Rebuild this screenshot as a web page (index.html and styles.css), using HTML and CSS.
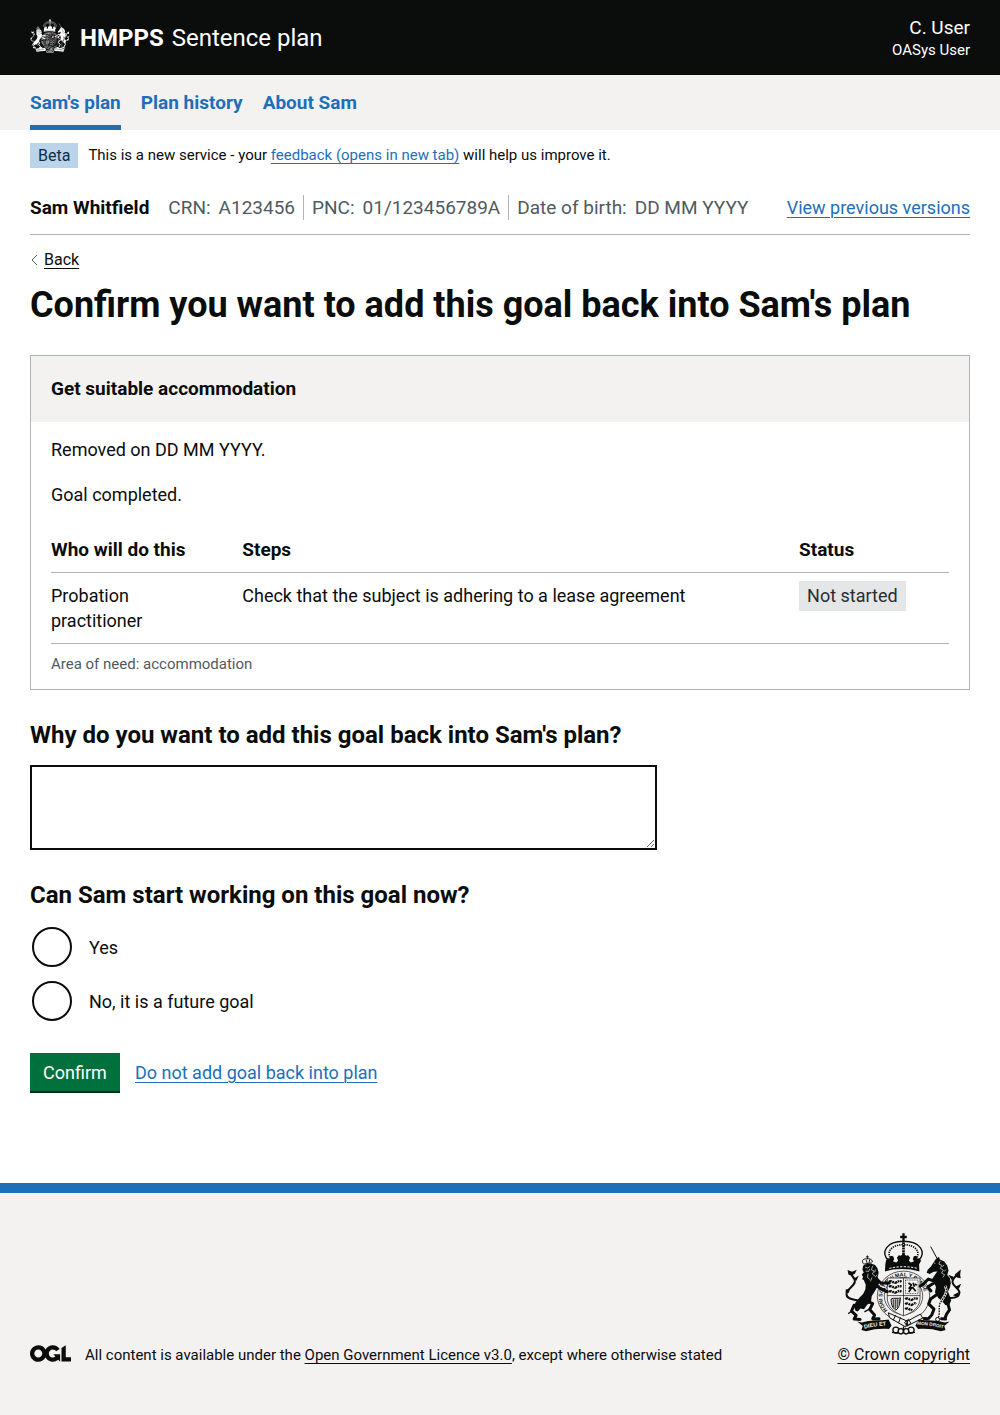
FILE: index.html
```html
<!DOCTYPE html>
<html lang="en">
<head>
  <meta charset="utf-8">
  <meta name="viewport" content="width=device-width, initial-scale=1">
  <title>Confirm you want to add this goal back into Sam's plan - Sentence plan</title>
  <link rel="stylesheet" href="styles.css">
</head>
<body>
  <header class="header">
    <div class="container header-inner">
      <div class="brand">
        <svg class="brand-crest" viewBox="36 22 350 308" aria-hidden="true"><use href="#crest"/></svg>
        <a class="brand-org" href="#">HMPPS</a>
        <a class="brand-service" href="#">Sentence plan</a>
      </div>
      <div class="user">
        <span class="user-name">C. User</span>
        <span class="user-role">OASys User</span>
      </div>
    </div>
  </header>

  <nav class="primary-nav" aria-label="Primary navigation">
    <div class="container nav-list">
      <a class="nav-link nav-link-current" href="#" aria-current="page">Sam's plan</a>
      <a class="nav-link" href="#">Plan history</a>
      <a class="nav-link" href="#">About Sam</a>
    </div>
  </nav>

  <div class="container">
    <div class="phase">
      <strong class="tag tag-beta">Beta</strong>
      <span>This is a new service - your <a class="link" href="#">feedback (opens in new tab)</a> will help us improve it.</span>
    </div>

    <div class="identity">
      <strong class="identity-name">Sam Whitfield</strong>
      <dl class="identity-list">
        <div class="identity-item"><dt>CRN:</dt><dd>A123456</dd></div>
        <div class="identity-item"><dt>PNC:</dt><dd>01/123456789A</dd></div>
        <div class="identity-item"><dt>Date of birth:</dt><dd>DD MM YYYY</dd></div>
      </dl>
      <a class="link identity-versions" href="#">View previous versions</a>
    </div>

    <div class="back">
      <svg class="back-arrow" viewBox="0 0 8 12" aria-hidden="true"><path d="M7 1L2 6l5 5"/></svg>
      <a class="link link-dark" href="#">Back</a>
    </div>

    <main>
      <h1 class="title">Confirm you want to add this goal back into Sam's plan</h1>

      <section class="card">
        <h2 class="card-title">Get suitable accommodation</h2>
        <div class="card-body">
          <p>Removed on DD MM YYYY.</p>
          <p>Goal completed.</p>
          <table class="steps">
            <thead>
              <tr><th class="col-who" scope="col">Who will do this</th><th scope="col">Steps</th><th class="col-status" scope="col">Status</th></tr>
            </thead>
            <tbody>
              <tr><td>Probation practitioner</td><td>Check that the subject is adhering to a lease agreement</td><td><strong class="tag tag-status">Not started</strong></td></tr>
            </tbody>
          </table>
          <p class="card-note">Area of need: accommodation</p>
        </div>
      </section>

      <form class="form">
        <div class="field">
          <label class="question" for="reason">Why do you want to add this goal back into Sam's plan?</label>
          <textarea class="textarea" id="reason" name="reason"></textarea>
        </div>
        <fieldset class="choices">
          <legend class="question">Can Sam start working on this goal now?</legend>
          <div class="choice">
            <input class="radio" type="radio" id="start-yes" name="start" value="yes">
            <label for="start-yes">Yes</label>
          </div>
          <div class="choice">
            <input class="radio" type="radio" id="start-no" name="start" value="no">
            <label for="start-no">No, it is a future goal</label>
          </div>
        </fieldset>
        <div class="actions">
          <button class="button" type="submit">Confirm</button>
          <a class="link" href="#">Do not add goal back into plan</a>
        </div>
      </form>
    </main>
  </div>

  <footer class="footer">
    <div class="container footer-inner">
      <div class="licence">
        <svg class="ogl" viewBox="0 0 483 196" aria-hidden="true"><path d="M421.5 142.8V.1l-50.7 32.3v161.1h112.4v-50.7zm-122.3-9.6A47.12 47.12 0 0 1 221 97.8c0-26 21.1-47.1 47.1-47.1 16.7 0 31.4 8.7 39.7 21.8l42.7-27.2A97.63 97.63 0 0 0 268.1 0c-36.5 0-68.3 20.1-85.1 49.7A98 98 0 0 0 97.8 0C43.9 0 0 43.9 0 97.8s43.9 97.8 97.8 97.8c36.5 0 68.3-20.1 85.1-49.7a97.76 97.76 0 0 0 149.6 25.4l19.4 22.2h3v-87.8h-80l24.3 27.5zM97.8 145c-26 0-47.1-21.1-47.1-47.1s21.1-47.1 47.1-47.1 47.1 21.1 47.1 47.1S123.8 145 97.8 145"/></svg>
        <span>All content is available under the <a class="link link-dark" href="#">Open Government Licence v3.0</a>, except where otherwise stated</span>
      </div>
      <div class="copyright">
        <svg class="footer-crest" viewBox="36 22 350 308" aria-hidden="true">
          <g id="crest" stroke-linejoin="round">
            <!-- crown -->
            <g fill="none" stroke="currentColor">
              <path stroke-width="7" d="M211 23v26M201 34h20"/>
              <path stroke-width="4" d="M166 106C140 80 160 47 211 47s71 33 45 59"/>
              <path stroke-width="5" stroke-dasharray="4 3" d="M174 102c-17-24 1-44 37-45 36 1 54 21 37 45"/>
              <path stroke-width="8" stroke-dasharray="6 2" d="M211 50v46"/>
            </g>
            <path fill="currentColor" d="M158 106l5-8 6 1 3-8 8 1 3 9-4 6 10 4 6-6-4-8 6-8 6 2 8-7 8 7 6-2 6 8-4 8 6 6 10-4-4-6 3-9 8-1 3 8 6-1 5 8-6 11 1 21c-32-10-76-10-104 0l1-21z"/>
            <path fill="none" stroke="var(--paper)" stroke-width="3" stroke-dasharray="7 4" d="M168 129c28-7 58-7 86 0"/>
            <!-- garter and shield -->
            <ellipse cx="211" cy="212" rx="79" ry="75" fill="var(--paper)" stroke="currentColor" stroke-width="2"/>
            <ellipse cx="211" cy="212" rx="58" ry="56" fill="none" stroke="currentColor" stroke-width="2"/>
            <path id="garter" fill="none" d="M164 257a64 62 0 1 1 94 0"/>
            <text class="crest-garter"><textPath href="#garter" startOffset="2">HONI SOIT QUI MAL Y PENSE</textPath></text>
            <path fill="var(--paper)" stroke="currentColor" stroke-width="2" d="M162 158h99v60c0 27-21 44-50 54-29-10-49-27-49-54z"/>
            <path fill="none" stroke="currentColor" stroke-width="2" d="M211 158v114M162 211h99"/>
            <path fill="none" stroke="currentColor" stroke-width="7" stroke-dasharray="9 2 5 2" d="M167 170q6-5 12 0t12 0 14-1M167 185q6-5 12 0t12 0 14-1M167 200q6-5 12 0t12 0 14-1M216 222q6-5 12 0t12 0 14-1M216 237q6-5 12 0t12 0 10-1M216 252q6-5 12 0t8-1"/>
            <path fill="none" stroke="currentColor" stroke-width="2" stroke-dasharray="3 2" d="M217 164h38v41h-38z"/>
            <path fill="none" stroke="currentColor" stroke-width="5" d="M226 173l9 6-7 10 11-2 9 11M240 172l4 12M235 188l-8 12M246 176l5 4"/>
            <path fill="none" stroke="currentColor" stroke-width="3" d="M174 221c10-5 19 1 28-3-2 15-3 29-14 37-11-7-15-18-14-34zM180 222v24M186 222v29M192 222v26M198 222v16"/>
            <!-- lion -->
            <path fill="none" stroke="currentColor" stroke-width="3" d="M90 115c-7-9-1-15 7-15s19-2 20 10M102 100v-10M98 94h8M91 116l24-4M98 103l3 9M109 102l-2 10"/>
            <path fill="currentColor" d="M89 121l8-5 16-2 12 5 7 9 4 13-3 14 6 14-4 10-8 14-12 20-2 16-13 11-8 12-11-2-8 9-7-2-4-12 4-13 11-14 12-12 7-14 1-14-6-14-5-2 3-7-4-8 6-6-4-8z"/>
            <path fill="none" stroke="currentColor" stroke-width="9" stroke-linecap="round" d="M128 160l16 14 24-1M124 176l18 15 20 8M62 240l-8 18 14 13-6 10M62 282l18 1M98 226l20 9-9 18 15 17-6 11M119 282l18-1"/>
            <path fill="none" stroke="currentColor" stroke-width="4" d="M156 166l8 14M152 188l6 15M108 252l-15 8M54 258l-10 8"/>
            <path fill="none" stroke="var(--paper)" stroke-width="2" d="M95 125l8 3 6-5M97 137l9 1 3-7M118 121l-4 12 8 4-5 9 8 6M104 145l-2 11 7 6M116 156l-5 12M126 132l-2 9M131 148l-5 7"/>
            <path fill="none" stroke="currentColor" stroke-width="6" d="M74 226c-19-3-35-6-35-18-1-16 22-24 25-38 2-12-9-17-13-26M39 206l1-14"/>
            <path fill="currentColor" d="M42 134l14 5 14-6-6 12-10 5-9-2zM61 160l15-10-7 16zM37 197l12-8-3 14z"/>
            <!-- unicorn -->
            <path fill="none" stroke="currentColor" stroke-width="3" d="M293 63l20 37"/>
            <path fill="currentColor" d="M308 101l10-7 3 8 13 6 9 12 4 15-4 14 8 9 3 16-3 13-6 12 6 14 4 13-6 13-11 1-11-13-11-9-10-17 3-16-5-12-9-8 9-14 9-13-11 1-12 7-9-4 3-9 10-10z"/>
            <path fill="none" stroke="currentColor" stroke-width="9" stroke-linecap="round" d="M306 168l-20-7-17 17-8 4M304 172l-20 13 10 12M312 208l-19 13-6 15 16 16-7 18-8 9M283 281l-10-1M344 232l6 22-9 13-5 13M326 281l12 1"/>
            <path fill="none" stroke="var(--paper)" stroke-width="2" d="M322 106l-4 10 9 4-5 9 9 5-5 9 9 5-5 8M303 112l4 2M333 118l-4 6M339 132l-5 6"/>
            <path fill="none" stroke="currentColor" stroke-width="6" d="M348 218c14 1 30-2 32-15 1-14-19-18-21-32-1-10 8-17 14-23"/>
            <path fill="currentColor" d="M384 132l-2 17 2 10-12-3-6-9zM346 148l16 6-4 12zM368 184l17-9-7 16zM360 210l18-10-2 16z"/>
            <path fill="none" stroke="var(--paper)" stroke-width="8" d="M337 182c11 21-8 37-16 53-5 12 1 27-5 44"/>
            <path fill="none" stroke="currentColor" stroke-width="4" stroke-dasharray="5 3" d="M337 182c11 21-8 37-16 53-5 12 1 27-5 44"/>
            <circle cx="314" cy="283" r="6" fill="none" stroke="currentColor" stroke-width="3"/>
            <!-- buckle, motto scroll and roses -->
            <path fill="var(--paper)" stroke="currentColor" stroke-width="3" d="M165 263l57 25-4 18-49-28zM223 288l39-21 7 12-46 23z"/>
            <path fill="none" stroke="currentColor" stroke-width="3" d="M187 270l-7 16M202 277l-6 17M214 292l12-9 7 11-11 9z"/>
            <path fill="currentColor" d="M71 289l14 3c27-8 51-5 81-9l9 19-8 10c-25-2-45 0-69 7l-14-4 4-12zM350 289l-14 3c-27-8-50-5-80-9l-9 19 8 10c25-2 45 0 69 7l14-4-4-12z"/>
            <path id="motto-left" fill="none" d="M93 311c26-8 49-8 76-11"/>
            <path id="motto-right" fill="none" d="M252 299c26 1 50 3 82 12"/>
            <text class="crest-motto"><textPath href="#motto-left">DIEU ET</textPath></text>
            <text class="crest-motto crest-motto-long"><textPath href="#motto-right">MON DROIT</textPath></text>
            <g fill="var(--paper)" stroke="currentColor" stroke-width="4">
              <circle cx="188" cy="315" r="9"/>
              <circle cx="234" cy="315" r="9"/>
              <circle cx="203" cy="319" r="8"/>
              <circle cx="219" cy="319" r="8"/>
            </g>
            <path fill="none" stroke="currentColor" stroke-width="4" d="M176 322l20 2M226 324l20-2M211 304v20"/>
          </g>
        </svg>
        <a class="link link-dark" href="#">© Crown copyright</a>
      </div>
    </div>
  </footer>
</body>
</html>
```
FILE: styles.css
```css
:root {
  --ink: #0b0c0c;
  --blue: #1d70b8;
  --grey: #f3f2f1;
  --line: #b1b4b6;
  --muted: #505a5f;
}

* {
  box-sizing: border-box;
}

body {
  display: flex;
  flex-direction: column;
  min-height: 100vh;
  margin: 0;
  background: #fff;
  color: var(--ink);
  font-family: Roboto, "Liberation Sans", sans-serif;
  font-size: 18px;
  line-height: 25px;
}

h1,
h2,
p,
dl,
dd {
  margin: 0;
}

.container {
  width: 100%;
  max-width: 1020px;
  margin: 0 auto;
  padding: 0 30px;
}

.link {
  color: var(--blue);
  text-decoration: underline;
  text-decoration-thickness: 1px;
  text-underline-offset: 3px;
}

.link-dark {
  color: var(--ink);
}

/* Header */
.header {
  background: var(--ink);
  color: #fff;
}

.header-inner {
  display: flex;
  justify-content: space-between;
  align-items: center;
  min-height: 75px;
}

.brand {
  display: flex;
  align-items: center;
  font-size: 24px;
  line-height: 30px;
}

.brand a {
  color: #fff;
  text-decoration: none;
}

.brand-crest {
  --paper: var(--ink);
  width: 40px;
  height: 34px;
  margin: 0 10px 4px 0;
}

.brand-org {
  margin-right: 8px;
  font-weight: 700;
}

.user {
  display: flex;
  flex-direction: column;
  align-items: flex-end;
}

.user-name {
  font-size: 19px;
}

.user-role {
  font-size: 15px;
  line-height: 20px;
}

/* Navigation */
.primary-nav {
  background: var(--grey);
}

.nav-list {
  display: flex;
  gap: 20px;
}

.nav-link {
  padding: 15px 0 10px;
  border-bottom: 5px solid transparent;
  color: var(--blue);
  font-size: 19px;
  font-weight: 700;
  text-decoration: none;
}

.nav-link-current {
  border-color: var(--blue);
}

/* Phase banner */
.phase {
  display: flex;
  align-items: center;
  gap: 10px;
  padding: 13px 0;
  font-size: 15px;
}

.tag {
  display: inline-block;
  padding: 0 8px;
  font-weight: 400;
}

.tag-beta {
  background: #bbd4ea;
  color: #0c2d4a;
  font-size: 16px;
}

.tag-status {
  padding: 2px 8px 3px;
  margin: -2px 0 -3px;
  background: #e5e6e7;
  color: #282d30;
}

/* Person details */
.identity {
  display: flex;
  align-items: center;
  padding: 14px 0;
  border-bottom: 1px solid var(--line);
}

.identity-name {
  margin-right: 19px;
  font-size: 19px;
}

.identity-list {
  display: flex;
  color: var(--muted);
  font-size: 19px;
}

.identity-item {
  display: flex;
  gap: 8px;
}

.identity-item + .identity-item {
  margin-left: 8px;
  padding-left: 8px;
  border-left: 1px solid var(--line);
}

.identity-versions {
  margin-left: auto;
}

.back {
  display: flex;
  align-items: center;
  gap: 6px;
  margin-top: 15px;
  font-size: 16px;
  line-height: 20px;
}

.back-arrow {
  width: 8px;
  height: 12px;
  fill: none;
  stroke: var(--muted);
}

.title {
  margin: 15px 0 30px;
  font-size: 36px;
  line-height: 40px;
}

/* Goal card */
.card {
  border: 1px solid var(--line);
}

.card-title {
  padding: 20px 20px 21px;
  background: var(--grey);
  font-size: 19px;
}

.card-body {
  padding: 15px 20px;
}

.card-body p {
  margin-bottom: 20px;
}

.steps {
  width: 100%;
  border-collapse: collapse;
}

.steps th,
.steps td {
  padding: 10px 20px 10px 0;
  border-bottom: 1px solid var(--line);
  text-align: left;
  vertical-align: top;
}

.steps th {
  font-size: 19px;
}

.col-who {
  width: 21.3%;
}

.col-status {
  width: 16.7%;
}

.card-body .card-note {
  margin: 10px 0 0;
  color: var(--muted);
  font-size: 15px;
  line-height: 20px;
}

/* Form */
.form {
  margin: 30px 0 90px;
}

.question {
  display: block;
  padding: 0;
  font-size: 24px;
  font-weight: 700;
  line-height: 30px;
}

.textarea {
  display: block;
  width: 66.7%;
  height: 85px;
  margin-top: 15px;
  padding: 5px;
  border: 2px solid var(--ink);
  border-radius: 0;
  background: #fff;
  font: inherit;
  resize: vertical;
}

.choices {
  min-width: 0;
  margin: 30px 0;
  padding: 0;
  border: 0;
}

.choice {
  display: flex;
  align-items: center;
  gap: 17px;
  margin: 14px 0 0 2px;
}

.question + .choice {
  margin-top: 17px;
}

.radio {
  appearance: none;
  width: 40px;
  height: 40px;
  margin: 0;
  border: 2px solid var(--ink);
  border-radius: 50%;
  background: #fff;
}

.radio:checked {
  box-shadow: inset 0 0 0 8px #fff;
  background: var(--ink);
}

.actions {
  display: flex;
  align-items: baseline;
  gap: 15px;
  margin-top: 32px;
}

.button {
  min-width: 90px;
  height: 38px;
  margin-bottom: 2px;
  padding: 0 12px;
  border: 0;
  background: #00703c;
  box-shadow: 0 2px 0 #002d18;
  color: #fff;
  font: inherit;
}

/* Footer */
.footer {
  flex: 1;
  padding: 40px 0 50px;
  border-top: 10px solid var(--blue);
  background: var(--grey);
  font-size: 15px;
  line-height: 20px;
}

.footer-inner {
  display: flex;
  justify-content: space-between;
  align-items: flex-end;
}

.licence {
  display: flex;
  align-items: center;
  gap: 14px;
}

.ogl {
  width: 41px;
  height: 17px;
  margin-bottom: 3px;
  fill: var(--ink);
}

.copyright {
  display: flex;
  flex-direction: column;
  align-items: center;
  font-size: 16px;
}

.footer-crest {
  --paper: var(--grey);
  width: 117px;
  height: 102px;
  margin-bottom: 10px;
}

.crest-garter,
.crest-motto {
  fill: currentColor;
  font-family: "Liberation Sans", sans-serif;
  font-size: 16px;
  font-weight: 700;
}

.crest-motto {
  fill: var(--paper);
  font-size: 17px;
}

.crest-motto-long {
  font-size: 14px;
}
```
